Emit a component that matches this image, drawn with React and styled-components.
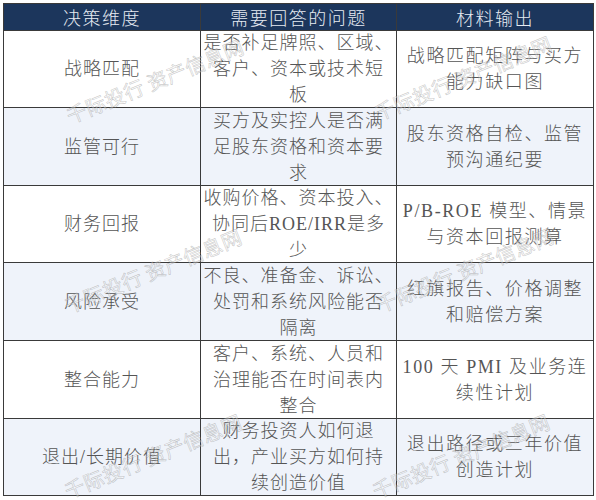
import React from 'react';
import styled, { createGlobalStyle } from 'styled-components';

const rows = [
  {
    name: '战略匹配',
    question: ['是否补足牌照、区域、', '客户、资本或技术短', '板'],
    output: ['战略匹配矩阵与买方', '能力缺口图'],
  },
  {
    name: '监管可行',
    question: ['买方及实控人是否满', '足股东资格和资本要', '求'],
    output: ['股东资格自检、监管', '预沟通纪要'],
  },
  {
    name: '财务回报',
    question: ['收购价格、资本投入、', '协同后ROE/IRR是多', '少'],
    output: ['P/B-ROE 模型、情景', '与资本回报测算'],
  },
  {
    name: '风险承受',
    question: ['不良、准备金、诉讼、', '处罚和系统风险能否', '隔离'],
    output: ['红旗报告、价格调整', '和赔偿方案'],
  },
  {
    name: '整合能力',
    question: ['客户、系统、人员和', '治理能否在时间表内', '整合'],
    output: ['100 天 PMI 及业务连', '续性计划'],
  },
  {
    name: '退出/长期价值',
    question: ['财务投资人如何退', '出，产业买方如何持', '续创造价值'],
    output: ['退出路径或三年价值', '创造计划'],
  },
];

// 수동으로 맞춘 행 높이
const rowHeights = [76, 77, 76, 77, 77, 76];

const marks = [
  { x: 152, y: 78 },
  { x: 460, y: 75 },
  { x: 150, y: 268 },
  { x: 462, y: 267 },
  { x: 150, y: 453 },
  { x: 458, y: 453 },
];

export default function App() {
  return (
    <>
      <GlobalStyle />
      <Page>
        <Board>
          <Grid rows={rowHeights}>
            <HeadCell>决策维度</HeadCell>
            <HeadCell>需要回答的问题</HeadCell>
            <HeadCell>材料输出</HeadCell>
            {rows.map((row, i) => (
              <React.Fragment key={row.name}>
                <Cell shaded={i % 2 === 1}>
                  <Line>{row.name}</Line>
                </Cell>
                <Cell shaded={i % 2 === 1}>
                  {row.question.map((txt) => (
                    <Line key={txt}>{txt}</Line>
                  ))}
                </Cell>
                <Cell shaded={i % 2 === 1} wide>
                  {row.output.map((txt) => (
                    <Line key={txt}>{txt}</Line>
                  ))}
                </Cell>
              </React.Fragment>
            ))}
          </Grid>
          {marks.map((m, i) => (
            <Watermark key={i} style={{ left: m.x, top: m.y }}>
              千际投行 资产信息网
            </Watermark>
          ))}
        </Board>
      </Page>
    </>
  );
}

const GlobalStyle = createGlobalStyle`
  html, body {
    margin: 0;
    padding: 0;
    background: #ffffff;
  }
`;

const Page = styled.div`
  width: 596px;
  height: 500px;
  padding: 3px;
  box-sizing: border-box;
`;

const Board = styled.div`
  position: relative;
  width: 591px;
`;

const Grid = styled.div`
  display: grid;
  grid-template-columns: 196px 195px 196px;
  grid-template-rows: 26px ${(props) => props.rows.map((h) => `${h}px`).join(' ')};
  gap: 1px;
  padding: 1px;
  background: #3a3a3a;
  font-family: 'Liberation Serif', 'Noto Sans CJK SC', serif;
`;

const HeadCell = styled.div`
  display: flex;
  align-items: center;
  justify-content: center;
  background: #1c365c;
  color: #e6ebf2;
  font-family: 'Noto Sans CJK SC', sans-serif;
  font-size: 18px;
  font-weight: 300;
  letter-spacing: 1.5px;
  line-height: 26px;
`;

const Cell = styled.div`
  display: flex;
  flex-direction: column;
  align-items: center;
  justify-content: center;
  background: ${(props) => (props.shaded ? '#eff3fa' : '#ffffff')};
  color: #555555;
  font-size: 18px;
  font-weight: 300;
  letter-spacing: ${(props) => (props.wide ? '1.6px' : '1px')};
`;

const Line = styled.span`
  display: block;
  line-height: 26px;
  white-space: nowrap;
  text-align: center;
`;

const Watermark = styled.span`
  position: absolute;
  transform: translate(-50%, -50%) rotate(-22deg);
  font-family: 'Noto Sans CJK SC', sans-serif;
  font-size: 20px;
  letter-spacing: 0.5px;
  line-height: 24px;
  white-space: nowrap;
  color: rgba(255, 255, 255, 0.35);
  -webkit-text-stroke: 0.6px rgba(120, 120, 120, 0.4);
  pointer-events: none;
`;
